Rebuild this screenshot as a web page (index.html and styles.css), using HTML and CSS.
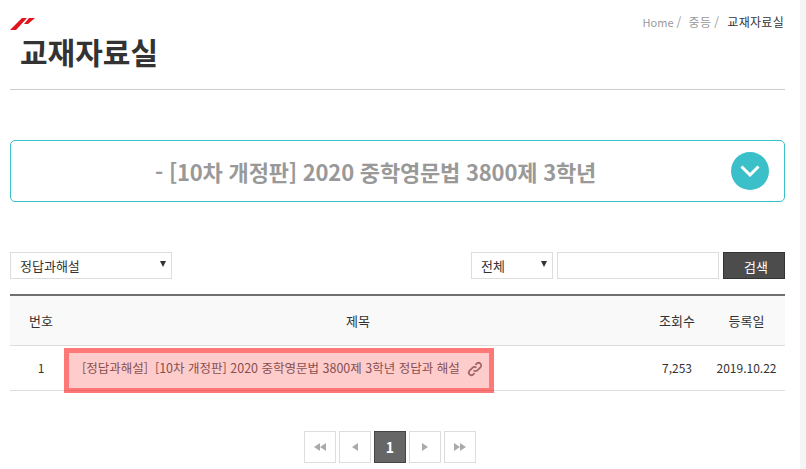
FILE: index.html
```html
<!DOCTYPE html>
<html lang="ko">
<head>
    <meta charset="UTF-8">
    <meta name="viewport" content="width=device-width, initial-scale=1.0">
    <title>교재자료실</title>
    <link rel="stylesheet" href="styles.css">
</head>
<body>
    <div class="page">
        <div class="content">
            <header class="page-head">
                <div class="head-left">
                    <svg class="logo" width="26" height="13" viewBox="0 0 26 13">
                        <polygon points="0,12 6,12 17,0 12,0" fill="#e1141e"/>
                        <polygon points="14,6 18,6 25,0 19,0" fill="#e1141e"/>
                    </svg>
                    <h1>교재자료실</h1>
                </div>
                <div class="breadcrumb">
                    <span class="home">Home</span><i>/</i><span>중등</span><i>/</i><span class="current">교재자료실</span>
                </div>
            </header>

            <div class="book-select">
                <p class="book-title">- [10차 개정판] 2020 중학영문법 3800제 3학년</p>
                <span class="round-btn">
                    <svg width="20" height="12" viewBox="0 0 20 12">
                        <polyline points="1.5,1.5 10,10 18.5,1.5" fill="none" stroke="#fff" stroke-width="3"/>
                    </svg>
                </span>
            </div>

            <div class="filter-row">
                <div class="select select-cat"><span>정답과해설</span><b class="arrow"></b></div>
                <form class="search">
                    <div class="select select-type"><span>전체</span><b class="arrow"></b></div>
                    <input type="text" class="search-input">
                    <button type="button" class="search-btn">검색</button>
                </form>
            </div>

            <div class="board">
                <table>
                    <thead>
                        <tr>
                            <th class="col-no">번호</th>
                            <th>제목</th>
                            <th class="col-hit">조회수</th>
                            <th class="col-date">등록일</th>
                        </tr>
                    </thead>
                    <tbody>
                        <tr>
                            <td>1</td>
                            <td class="subject">
                                <span>[정답과해설]&nbsp; [10차 개정판] 2020 중학영문법 3800제 3학년 정답과 해설</span>
                                <svg class="link-icon" width="16" height="16" viewBox="0 0 16 16" fill="none" stroke="#8a7f80" stroke-width="1.8">
                                    <path d="M6.6 9.4a2.6 2.6 0 0 0 3.7 0l3.1-3.1a2.6 2.6 0 0 0-3.7-3.7L8.4 3.9"/>
                                    <path d="M9.4 6.6a2.6 2.6 0 0 0-3.7 0L2.6 9.7a2.6 2.6 0 0 0 3.7 3.7l1.3-1.3"/>
                                </svg>
                            </td>
                            <td>7,253</td>
                            <td>2019.10.22</td>
                        </tr>
                    </tbody>
                </table>
                <div class="highlight"></div>
            </div>

            <nav class="pager">
                <a href="#"><b class="tri left"></b><b class="tri left"></b></a>
                <a href="#"><b class="tri left"></b></a>
                <a href="#" class="on">1</a>
                <a href="#"><b class="tri right"></b></a>
                <a href="#"><b class="tri right"></b><b class="tri right"></b></a>
            </nav>
        </div>
        <div class="track"></div>
    </div>
</body>
</html>
```

FILE: styles.css
```css
* {
    box-sizing: border-box;
}
html, body {
    margin: 0;
    height: 100%;
    overflow: hidden;
}
body {
    font-family: "Noto Sans CJK KR", "Noto Sans", sans-serif;
    font-size: 12px;
    color: #333;
    background-color: #fff;
}
.page {
    display: flex;
    height: 469px;
}
.content {
    width: 775px;
    margin: 0 15px 0 10px;
}
.track {
    width: 6px;
    background-color: #f5f5f5;
}

/* head */
.page-head {
    display: flex;
    justify-content: space-between;
    height: 90px;
    border-bottom: 1px solid #ccc;
}
.logo {
    display: block;
    margin-top: 18px;
}
h1 {
    margin: -2px 0 0 10px;
    font-size: 30px;
    line-height: 44px;
    font-weight: 700;
    color: #333;
}
.breadcrumb {
    display: flex;
    gap: 3px;
    padding-top: 14px;
    padding-right: 1px;
    font-size: 12px;
    letter-spacing: 0.3px;
    line-height: 16px;
    color: #999;
}
.breadcrumb .home {
    font-size: 11px;
    letter-spacing: 0;
}
.breadcrumb i {
    font-style: normal;
    margin-right: 4px;
}
.breadcrumb .current {
    color: #333;
    margin-left: 1px;
}

/* book dropdown */
.book-select {
    display: flex;
    align-items: center;
    justify-content: space-between;
    height: 62px;
    margin-top: 50px;
    padding: 0 15px 0 144px;
    border: 1px solid #3bbfc8;
    border-radius: 5px;
}
.book-title {
    margin: 0;
    font-size: 22px;
    letter-spacing: -0.2px;
    font-weight: 700;
    color: #999;
}
.round-btn {
    display: flex;
    align-items: center;
    justify-content: center;
    width: 38px;
    height: 38px;
    border-radius: 50%;
    background-color: #3bbfc8;
}

/* filter */
.filter-row {
    display: flex;
    justify-content: space-between;
    height: 27px;
    margin-top: 50px;
}
.search {
    display: flex;
    gap: 4px;
    margin: 0;
}
.select {
    display: flex;
    justify-content: space-between;
    height: 27px;
    padding: 4px 5px 0 9px;
    border: 1px solid #ddd;
    font-size: 13px;
    line-height: 18px;
    color: #333;
}
.select-cat {
    width: 162px;
}
.select-type {
    width: 82px;
}
.arrow {
    width: 0;
    height: 0;
    margin-top: 4px;
    border-left: 3.5px solid transparent;
    border-right: 3.5px solid transparent;
    border-top: 6px solid #333;
}
.search-input {
    width: 162px;
    height: 27px;
    border: 1px solid #ddd;
    background-color: #fff;
}
.search-btn {
    width: 62px;
    height: 27px;
    padding: 2px 0 0 4px;
    border: 1px solid #333;
    background-color: #4c4c4c;
    color: #fff;
    font-family: inherit;
    font-size: 13px;
}

/* board */
.board {
    position: relative;
    margin-top: 15px;
    border-top: 2px solid #707070;
}
table {
    width: 100%;
    border-collapse: collapse;
    table-layout: fixed;
}
th {
    height: 49px;
    background-color: #f9f9f9;
    border-bottom: 1px solid #ddd;
    font-size: 13px;
    font-weight: 400;
    color: #333;
}
td {
    height: 45px;
    border-bottom: 1px solid #ddd;
    text-align: center;
    font-size: 12px;
    color: #333;
}
.col-no {
    width: 62px;
}
.col-hit {
    width: 66px;
}
.col-date {
    width: 75px;
    padding-right: 3px;
}
td:last-child {
    padding-right: 3px;
}
td.subject {
    padding-left: 10px;
    text-align: left;
    white-space: nowrap;
    font-size: 12.5px;
    color: #666;
}
.link-icon {
    margin-left: 4px;
    vertical-align: -4px;
}
.highlight {
    position: absolute;
    left: 54px;
    top: 52px;
    width: 430px;
    height: 45px;
    border: 5px solid rgba(255, 0, 0, 0.53);
    background-color: rgba(255, 0, 0, 0.2);
    background-clip: padding-box;
}

/* paging */
.pager {
    display: flex;
    justify-content: center;
    gap: 3px;
    margin-top: 40px;
    padding-right: 15px;
}
.pager a {
    display: flex;
    align-items: center;
    justify-content: center;
    width: 32px;
    height: 32px;
    border: 1px solid #ddd;
    text-decoration: none;
}
.pager .on {
    background-color: #666;
    border-color: #444;
    color: #fff;
    font-size: 14px;
    font-weight: 700;
}
.tri {
    width: 0;
    height: 0;
    border-top: 4px solid transparent;
    border-bottom: 4px solid transparent;
}
.tri.left {
    border-right: 6px solid #aaa;
}
.tri.right {
    border-left: 6px solid #aaa;
}
```
